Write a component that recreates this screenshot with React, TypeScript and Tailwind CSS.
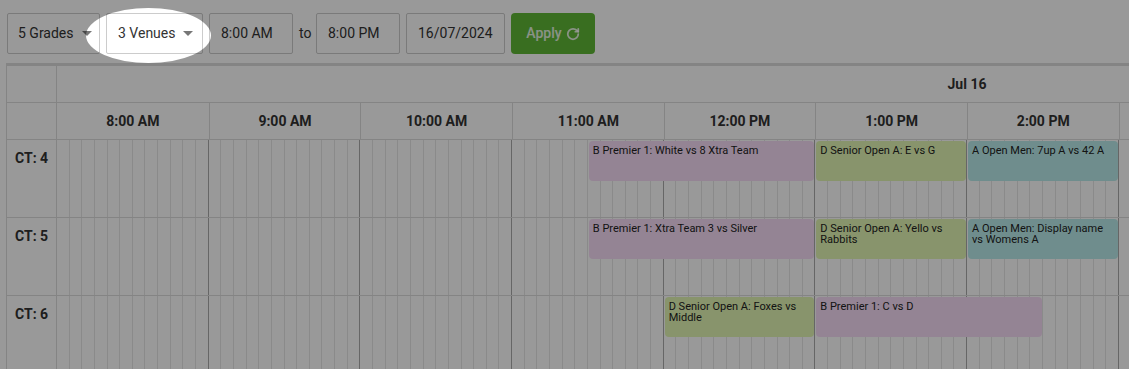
import React from "react";
import { RotateCw } from "lucide-react";

const HOUR = 151.67;
const hours = [
  "8:00 AM", "9:00 AM", "10:00 AM", "11:00 AM", "12:00 PM", "1:00 PM",
  "2:00 PM", "3:00 PM", "4:00 PM", "5:00 PM", "6:00 PM", "7:00 PM",
];

type Ev = { start: number; end: number; text: string; color: string };
const rows: { label: string; events: Ev[] }[] = [
  {
    label: "CT: 4",
    events: [
      { start: 3.5, end: 5, text: "B Premier 1: White vs 8 Xtra Team", color: "bg-[#f7ddf7]" },
      { start: 5, end: 6, text: "D Senior Open A: E vs G", color: "bg-[#e3f7b4]" },
      { start: 6, end: 7, text: "A Open Men: 7up A vs 42 A", color: "bg-[#b9eceb]" },
    ],
  },
  {
    label: "CT: 5",
    events: [
      { start: 3.5, end: 5, text: "B Premier 1: Xtra Team 3 vs Silver", color: "bg-[#f7ddf7]" },
      { start: 5, end: 6, text: "D Senior Open A: Yello vs Rabbits", color: "bg-[#e3f7b4]" },
      { start: 6, end: 7, text: "A Open Men: Display name vs Womens A", color: "bg-[#b9eceb]" },
    ],
  },
  {
    label: "CT: 6",
    events: [
      { start: 4, end: 5, text: "D Senior Open A: Foxes vs Middle", color: "bg-[#e3f7b4]" },
      { start: 5, end: 6.5, text: "B Premier 1: C vs D", color: "bg-[#f7ddf7]" },
    ],
  },
];

const slots = Array.from({ length: 144 }, (_, i) => i);

function Caret() {
  return (
    <span className="ml-[8px] inline-block h-0 w-0 border-x-[5px] border-t-[5px] border-x-transparent border-t-[#777]" />
  );
}

export default function App() {
  return (
    <div
      className="relative h-[369px] w-[1129px] overflow-hidden bg-white text-[#333]"
      style={{ fontFamily: "Roboto, 'Noto Sans', sans-serif" }}
    >
      {/* Toolbar */}
      <div className="flex items-center pl-[7px] pt-[13px] text-[14px]">
        <div className="flex h-[41px] w-[93px] items-center rounded-[2px] border border-[#ccc] pl-[10px]">
          5 Grades
          <Caret />
        </div>
        <div className="ml-[6px] flex h-[41px] w-[97px] items-center rounded-[2px] border border-[#ccc] pl-[11px]">
          3 Venues
          <Caret />
        </div>
        <div className="ml-[6px] flex h-[41px] w-[84px] items-center rounded-[2px] border border-[#ccc] pl-[11px]">
          8:00 AM
        </div>
        <span className="ml-[6px] w-[17px]">to</span>
        <div className="flex h-[41px] w-[84px] items-center rounded-[2px] border border-[#ccc] pl-[11px]">
          8:00 PM
        </div>
        <div className="ml-[6px] flex h-[41px] w-[99px] items-center rounded-[2px] border border-[#ccc] pl-[11px]">
          16/07/2024
        </div>
        <button className="ml-[6px] flex h-[41px] w-[84px] items-center justify-center gap-[4px] rounded-[4px] bg-[#5fb836] font-medium text-white/85">
          Apply
          <RotateCw size={14} strokeWidth={3} />
        </button>
      </div>

      {/* Scheduler */}
      <div className="ml-[6px] mt-[9px] w-[1872px] border-l border-t-[3px] border-[#dcdcdc]">
        {/* Date header */}
        <div className="flex h-[37px] border-b border-[#ddd]">
          <div className="w-[50px] shrink-0 border-r border-[#ddd]" />
          <div className="flex w-[1820px] items-center justify-center text-[14px] font-bold">
            Jul 16
          </div>
        </div>
        {/* Time header */}
        <div className="flex h-[37px] border-b border-[#ddd]">
          <div className="w-[50px] shrink-0 border-r border-[#ddd]" />
          {hours.map((h, i) => (
            <div
              key={h}
              className={`flex w-[151.67px] shrink-0 items-center justify-center text-[14px] font-bold ${i > 0 ? "border-l border-[#ddd]" : ""}`}
            >
              {h}
            </div>
          ))}
        </div>
        {/* Rows */}
        {rows.map((r) => (
          <div key={r.label} className="flex h-[78px] border-b border-[#ddd]">
            <div className="w-[50px] shrink-0 border-r border-[#ddd] pl-[8px] pt-[8px] text-[14px] font-bold">
              {r.label}
            </div>
            <div className="relative flex w-[1820px] shrink-0">
              {slots.map((s) => (
                <div
                  key={s}
                  className={`h-full flex-1 ${
                    s === 0 ? "" : s % 12 === 0 ? "border-l border-[#aaa]" : "border-l border-[#e6e6e6]"
                  }`}
                />
              ))}
              {r.events.map((e) => (
                <div
                  key={e.text}
                  className={`absolute top-[1px] h-[40px] rounded-[4px] px-[4px] pt-[4px] text-[11px] leading-[11px] text-[#222] ${e.color}`}
                  style={{ left: e.start * HOUR + 1, width: (e.end - e.start) * HOUR - 2 }}
                >
                  {e.text}
                </div>
              ))}
            </div>
          </div>
        ))}
      </div>

      {/* Spotlight overlay */}
      <div className="pointer-events-none absolute inset-0 overflow-hidden">
        <div className="absolute left-[86px] top-[8px] h-[55px] w-[125px] rounded-[50%] shadow-[0_0_0_2000px_rgba(0,0,0,0.4)]" />
      </div>
    </div>
  );
}
